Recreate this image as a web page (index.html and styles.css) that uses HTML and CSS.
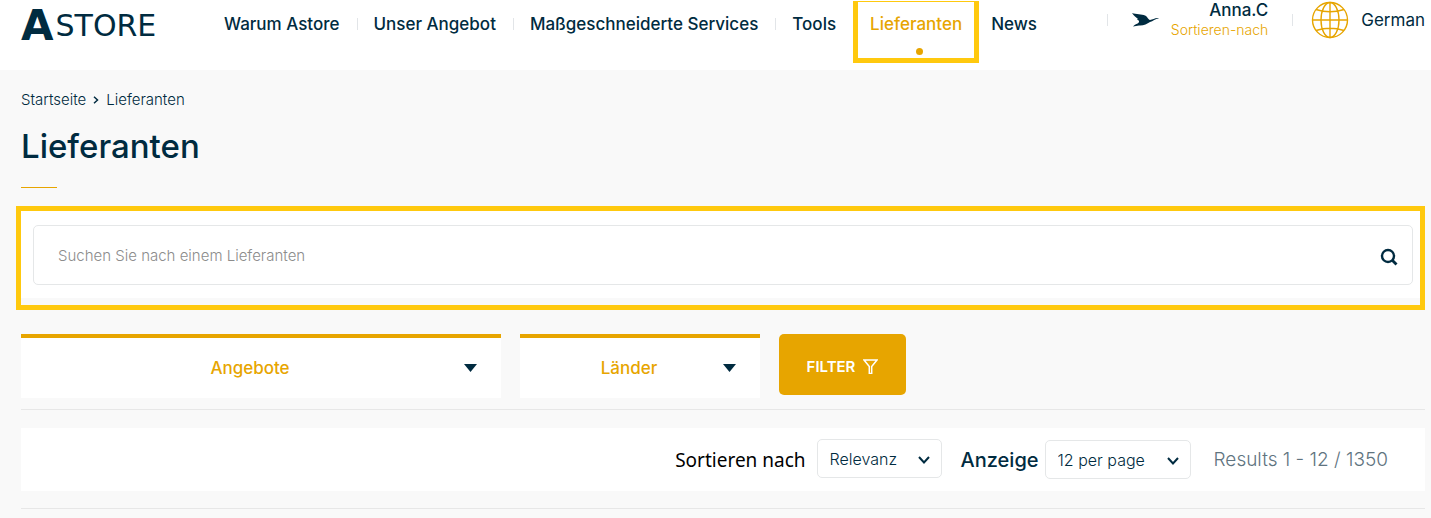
FILE: index.html
```html
<!DOCTYPE html>
<html lang="de">
<head>
<meta charset="utf-8">
<meta name="viewport" content="width=device-width, initial-scale=1">
<title>Lieferanten – Astore</title>
<link rel="stylesheet" href="styles.css">
</head>
<body>
<header class="header">
  <a class="logo" href="#" aria-label="Astore"><span class="logo-initial">A</span><span class="logo-rest">STORE</span></a>
  <nav class="nav" aria-label="Hauptnavigation">
    <a class="nav-link" href="#">Warum Astore</a>
    <a class="nav-link" href="#">Unser Angebot</a>
    <a class="nav-link" href="#">Maßgeschneiderte Services</a>
    <a class="nav-link" href="#">Tools</a>
    <a class="nav-link nav-link-active" href="#" aria-current="page">Lieferanten</a>
    <a class="nav-link" href="#">News</a>
  </nav>
  <div class="account">
    <svg class="bird" viewBox="0 0 27 14" aria-hidden="true"><path d="M0 0C4 1.500 10 1 13 2.500C16 4 16 6.500 18 7C21 7 23 4.500 27 5.200C23 6 21 8 18 9C15 11 11 13 7 12.500L1 13.500C3 11 6 11 7 9C7.500 7.500 5.500 7 5 6L6 6C4 4 2 3 0 0Z" fill="#002b40"/></svg>
    <a class="user" href="#"><span class="user-name">Anna.C</span><span class="user-note">Sortieren-nach</span></a>
  </div>
  <button class="language" type="button">
    <svg class="globe" viewBox="0 0 38 38" fill="none" stroke="#e7a500" stroke-width="1.4" aria-hidden="true"><circle cx="19" cy="19" r="17.5"/><ellipse cx="19" cy="19" rx="9" ry="17.5"/><path d="M19 1.500V36.500M1.500 19H36.500M5 8.500Q19 13 33 8.500M5 29.500Q19 25 33 29.500"/></svg>
    <span>German</span>
  </button>
</header>
<main class="main">
  <nav class="crumbs" aria-label="Brotkrumen">
    <a href="#">Startseite</a>
    <svg class="crumb-arrow" viewBox="0 0 6 8" fill="none" stroke="#002b40" stroke-width="1.500" aria-hidden="true"><path d="M1 .8L4.500 4L1 7.200"/></svg>
    <a href="#">Lieferanten</a>
  </nav>
  <h1 class="title">Lieferanten</h1>
  <form class="search">
    <div class="search-panel">
      <div class="search-field">
        <input class="search-input" type="search" aria-label="Lieferanten suchen" placeholder="Suchen Sie nach einem Lieferanten">
        <button class="search-button" type="submit" aria-label="Suchen"><svg viewBox="0 0 18 18" fill="none" stroke="#002b40" stroke-width="2.400" aria-hidden="true"><circle cx="8" cy="8" r="6"/><path d="M12 12L16.500 16.500" stroke-width="2.800"/></svg></button>
      </div>
    </div>
  </form>
  <form class="filters">
    <div class="pick pick-wide">
      <select class="pick-select" aria-label="Angebote"><option>Angebote</option></select>
      <svg class="pick-arrow" viewBox="0 0 13 8" aria-hidden="true"><path d="M0 0H13L6.500 8Z" fill="#002b40"/></svg>
    </div>
    <div class="pick">
      <select class="pick-select" aria-label="Länder"><option>Länder</option></select>
      <svg class="pick-arrow" viewBox="0 0 13 8" aria-hidden="true"><path d="M0 0H13L6.500 8Z" fill="#002b40"/></svg>
    </div>
    <button class="filter-button" type="submit">FILTER <svg viewBox="0 0 15 15" fill="none" stroke="#fff" stroke-width="1.500" aria-hidden="true"><path d="M1 1H14L8.700 7.500V14.500H6.300V7.500Z"/></svg></button>
  </form>
  <form class="results">
    <label class="sort-label" for="sort">Sortieren nach</label>
    <div class="drop drop-sort">
      <select class="drop-select" id="sort"><option>Relevanz</option></select>
      <svg class="drop-arrow" viewBox="0 0 12 8" fill="none" stroke="#002b40" stroke-width="2" aria-hidden="true"><path d="M1 1L6 6.500L11 1"/></svg>
    </div>
    <label class="show-label" for="show">Anzeige</label>
    <div class="drop drop-show">
      <select class="drop-select" id="show"><option>12 per page</option></select>
      <svg class="drop-arrow" viewBox="0 0 12 8" fill="none" stroke="#002b40" stroke-width="2" aria-hidden="true"><path d="M1 1L6 6.500L11 1"/></svg>
    </div>
    <span class="count">Results 1 - 12 / 1350</span>
  </form>
</main>
</body>
</html>
```
FILE: styles.css
```css
* { box-sizing: border-box; }

body {
  margin: 0;
  background: #f9f9f9;
  color: #002b40;
  font-family: Inter, "Liberation Sans", sans-serif;
}

a { color: inherit; text-decoration: none; }
svg { display: block; flex: none; }
button, input, select { font: inherit; color: inherit; }

.header {
  display: flex;
  align-items: flex-start;
  height: 70px;
  padding: 0 6px 0 21px;
  background: #fff;
}

.logo {
  display: flex;
  align-items: center;
  gap: 2px;
  width: 186px;
  height: 50px;
  font-family: "DejaVu Sans", sans-serif;
}
.logo-initial { font-size: 42px; font-weight: 700; }
.logo-rest { font-size: 30px; }

.nav { display: flex; padding-top: 1px; }
.nav-link {
  position: relative;
  height: 62px;
  padding: 12px 17px;
  font-size: 17px;
  font-weight: 500;
  line-height: 22px;
  white-space: nowrap;
}
.nav-link:not(:first-child)::before {
  content: "";
  position: absolute;
  left: 0;
  top: 17px;
  width: 1px;
  height: 12px;
  background: #e2e5e8;
}
.nav-link-active {
  padding: 11px 12px;
  border: 5px solid #ffc90e;
  border-top-width: 1px;
  color: #e7a500;
}
.nav .nav-link-active::before {
  left: 50%;
  top: 46px;
  width: 7px;
  height: 7px;
  border-radius: 50%;
  background: #e7a500;
}
.nav .nav-link-active + .nav-link { padding-left: 12px; }
.nav .nav-link-active + .nav-link::before { display: none; }

.account {
  display: flex;
  align-items: flex-start;
  gap: 12px;
  margin-left: auto;
  padding-left: 25px;
  background: linear-gradient(#e2e5e8, #e2e5e8) 0 14px / 1px 12px no-repeat;
}
.bird { width: 27px; height: 14px; margin-top: 13px; }
.user { display: grid; justify-items: end; }
.user-name { font-size: 17px; font-weight: 500; line-height: 21px; }
.user-note { color: #e7a500; font-size: 14px; font-weight: 300; line-height: 18px; }

.language {
  display: flex;
  align-items: center;
  gap: 12px;
  margin-left: 24px;
  padding: 1px 0 0 19px;
  border: 0;
  background: linear-gradient(#e2e5e8, #e2e5e8) 0 14px / 1px 12px no-repeat;
  font-size: 17px;
}
.globe { width: 38px; height: 38px; }

.main { padding: 20px 6px 0 21px; }

.crumbs {
  display: flex;
  align-items: center;
  gap: 7px;
  font-size: 15px;
  font-weight: 300;
  line-height: 20px;
}
.crumb-arrow { width: 6px; height: 8px; }

.title {
  margin: 16px 0 0;
  font-size: 33px;
  font-weight: 500;
  line-height: 40px;
}
.title::after {
  content: "";
  display: block;
  width: 36px;
  height: 1px;
  margin-top: 21px;
  background: #e7a500;
}

.search {
  margin: 18px 0 0 -5px;
  padding-bottom: 7px;
  border: 5px solid #ffc90e;
}
.search-panel { padding: 14px 7px 13px 12px; background: #fff; }
.search-field {
  display: flex;
  align-items: center;
  height: 60px;
  padding: 0 14px 0 24px;
  border: 1px solid #e5e7e8;
  border-radius: 5px;
}
.search-input {
  flex: 1;
  min-width: 0;
  padding: 0;
  border: 0;
  outline: 0;
  background: none;
  font-size: 15px;
  font-weight: 300;
}
.search-input::placeholder { color: #8c8c8c; }
.search-button { padding: 4px 0 0; border: 0; background: none; }
.search-button svg { width: 18px; height: 18px; }

.filters {
  display: flex;
  align-items: flex-start;
  gap: 19px;
  padding: 24px 0 11px;
  border-bottom: 1px solid #e7e7e7;
}
.pick { display: grid; width: 240px; }
.pick-wide { width: 480px; }
.pick-select {
  grid-area: 1 / 1;
  appearance: none;
  height: 64px;
  padding: 0 22px 0 0;
  border: 0;
  border-top: 4px solid #e7a500;
  border-radius: 0;
  background: #fff;
  color: #e7a500;
  font-size: 17px;
  font-weight: 500;
  text-align: center;
  text-align-last: center;
}
.pick-arrow {
  grid-area: 1 / 1;
  place-self: center end;
  width: 13px;
  height: 8px;
  margin: 4px 24px 0 0;
  pointer-events: none;
}
.filter-button {
  display: flex;
  align-items: center;
  justify-content: center;
  gap: 8px;
  width: 127px;
  height: 61px;
  padding: 4px 0 0;
  border: 0;
  border-radius: 5px;
  background: #e7a500;
  color: #fff;
  font-size: 15px;
  font-weight: 600;
}
.filter-button svg { width: 15px; height: 15px; }

.results {
  display: flex;
  align-items: center;
  justify-content: flex-end;
  height: 63px;
  margin-top: 18px;
  padding-right: 37px;
  background: #fff;
}
.main::after {
  content: "";
  display: block;
  height: 1px;
  margin-top: 17px;
  background: #e7e7e7;
}
.sort-label {
  color: #000;
  font-family: "Noto Sans", sans-serif;
  font-size: 19px;
}
.drop { display: grid; }
.drop-sort { width: 125px; margin: 0 19px 2px 11px; }
.drop-show { width: 146px; margin: 0 23px 0 6px; }
.drop-select {
  grid-area: 1 / 1;
  appearance: none;
  height: 39px;
  padding: 0 12px;
  border: 1px solid #e5e7e8;
  border-radius: 5px;
  background: #fff;
  font-size: 16px;
  font-weight: 300;
}
.drop-arrow {
  grid-area: 1 / 1;
  place-self: center end;
  width: 12px;
  height: 8px;
  margin: 3px 12px 0 0;
  pointer-events: none;
}
.show-label { font-size: 20px; font-weight: 500; }
.count { color: #5f7480; font-size: 19px; font-weight: 300; }
```
